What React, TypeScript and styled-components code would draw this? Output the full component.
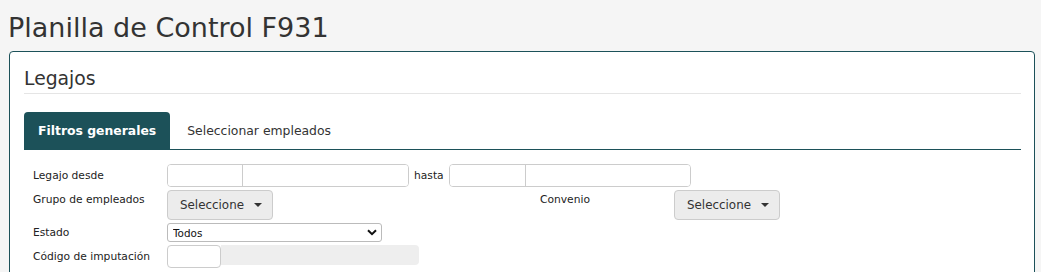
import React from 'react';
import styled, { createGlobalStyle } from 'styled-components';

const GlobalStyle = createGlobalStyle`
  html, body {
    margin: 0;
    padding: 0;
    background: #f5f5f5;
    font-family: "DejaVu Sans", Verdana, sans-serif;
    color: #333;
  }
`;

const TEAL = '#1c5159';

const Page = styled.div`
  padding: 12px 6px 0 9px;
`;

const Title = styled.h1`
  margin: 0 0 7px -1px;
  font-size: 27px;
  font-weight: normal;
  line-height: 32px;
  color: #333;
`;

const Panel = styled.div`
  width: 1026px;
  box-sizing: border-box;
  height: 230px;
  background: #fff;
  border: 1px solid ${TEAL};
  border-radius: 4px;
  padding: 14px 13px 0 14px;
`;

const PanelTitle = styled.h2`
  margin: 0;
  font-size: 18.8px;
  font-weight: normal;
  line-height: 26px;
  padding-bottom: 1px;
  border-bottom: 1px solid #e5e5e5;
`;

const Tabs = styled.div`
  display: flex;
  margin-top: 18px;
  border-bottom: 1px solid ${TEAL};
`;

const Tab = styled.div<{ $active?: boolean }>`
  height: 37px;
  display: flex;
  align-items: center;
  padding: 0 14px 0 ${p => (p.$active ? '14px' : '17px')};
  font-size: 12.4px;
  font-weight: ${p => (p.$active ? 'bold' : 'normal')};
  color: ${p => (p.$active ? '#fff' : '#333')};
  background: ${p => (p.$active ? TEAL : 'transparent')};
  border-radius: 4px 4px 0 0;
`;

const Form = styled.div`
  padding: 14px 0 0 9px;
  display: flex;
  flex-direction: column;
  gap: 3px;
`;

const Row = styled.div<{ $cols: string; $top?: boolean }>`
  display: grid;
  grid-template-columns: ${p => p.$cols};
  align-items: ${p => (p.$top ? 'start' : 'center')};
`;

const Label = styled.span<{ $pad?: number }>`
  font-size: 10.7px;
  line-height: 13px;
  color: #222;
  padding-top: ${p => p.$pad ?? 0}px;
  white-space: nowrap;
`;

const Cell = styled.div`
  display: flex;
  align-items: flex-start;
`;

const Group = styled.div`
  display: flex;
  width: 242px;
  height: 23px;
  box-sizing: border-box;
  border: 1px solid #ccc;
  border-radius: 4px;
  overflow: hidden;
`;

const GroupPart = styled.input<{ $w: number }>`
  width: ${p => p.$w}px;
  height: 100%;
  box-sizing: border-box;
  border: none;
  border-right: 1px solid #ccc;
  padding: 0 4px;
  outline: none;
  &:last-child {
    border-right: none;
    flex: 1;
  }
`;

const Hasta = styled.span`
  font-size: 10.7px;
  color: #222;
  padding: 0 5px;
  align-self: center;
`;

const Dropdown = styled.button`
  display: flex;
  align-items: center;
  gap: 10px;
  width: 106px;
  height: 30px;
  box-sizing: border-box;
  padding: 0 0 0 12px;
  background: #ececec;
  border: 1px solid #ccc;
  border-radius: 4px;
  font-family: inherit;
  font-size: 11.9px;
  color: #333;
`;

const Caret = styled.span`
  width: 0;
  height: 0;
  border-left: 4px solid transparent;
  border-right: 4px solid transparent;
  border-top: 4px solid #333;
`;

const SelectWrap = styled.div`
  position: relative;
  width: 215px;
  height: 19px;
`;

const Select = styled.select`
  appearance: none;
  display: block;
  width: 100%;
  height: 100%;
  box-sizing: border-box;
  border: 1px solid #bbb;
  border-radius: 3px;
  background: #fff;
  padding: 0 0 0 5px;
  font-family: inherit;
  font-size: 10.4px;
  color: #111;
`;

const Chevron = styled.svg`
  position: absolute;
  right: 5px;
  top: 6px;
  pointer-events: none;
`;

const CodeInput = styled.input`
  width: 54px;
  height: 23px;
  box-sizing: border-box;
  border: 1px solid #ccc;
  border-radius: 4px;
  outline: none;
`;

const ReadOnly = styled.div`
  width: 198px;
  height: 20px;
  background: #eee;
  border-radius: 0 4px 4px 0;
`;

export default function App() {
  return (
    <>
      <GlobalStyle />
      <Page>
        <Title>Planilla de Control F931</Title>
        <Panel>
          <PanelTitle>Legajos</PanelTitle>
          <Tabs>
            <Tab $active>Filtros generales</Tab>
            <Tab>Seleccionar empleados</Tab>
          </Tabs>
          <Form>
            <Row $cols="134px auto">
              <Label>Legajo desde</Label>
              <Cell>
                <Group>
                  <GroupPart $w={75} />
                  <GroupPart $w={167} />
                </Group>
                <Hasta>hasta</Hasta>
                <Group>
                  <GroupPart $w={76} />
                  <GroupPart $w={166} />
                </Group>
              </Cell>
            </Row>
            <Row $cols="134px 373px 134px auto" $top>
              <Label $pad={3}>Grupo de empleados</Label>
              <Cell>
                <Dropdown>
                  Seleccione <Caret />
                </Dropdown>
              </Cell>
              <Label $pad={3}>Convenio</Label>
              <Cell>
                <Dropdown>
                  Seleccione <Caret />
                </Dropdown>
              </Cell>
            </Row>
            <Row $cols="134px auto">
              <Label>Estado</Label>
              <SelectWrap>
                <Select defaultValue="todos">
                  <option value="todos">Todos</option>
                </Select>
                <Chevron width="10" height="7" viewBox="0 0 10 7">
                  <path d="M1 1.2 L5 5.2 L9 1.2" fill="none" stroke="#111" strokeWidth="2" />
                </Chevron>
              </SelectWrap>
            </Row>
            <Row $cols="134px auto">
              <Label>Código de imputación</Label>
              <Cell>
                <CodeInput />
                <ReadOnly />
              </Cell>
            </Row>
          </Form>
        </Panel>
      </Page>
    </>
  );
}
